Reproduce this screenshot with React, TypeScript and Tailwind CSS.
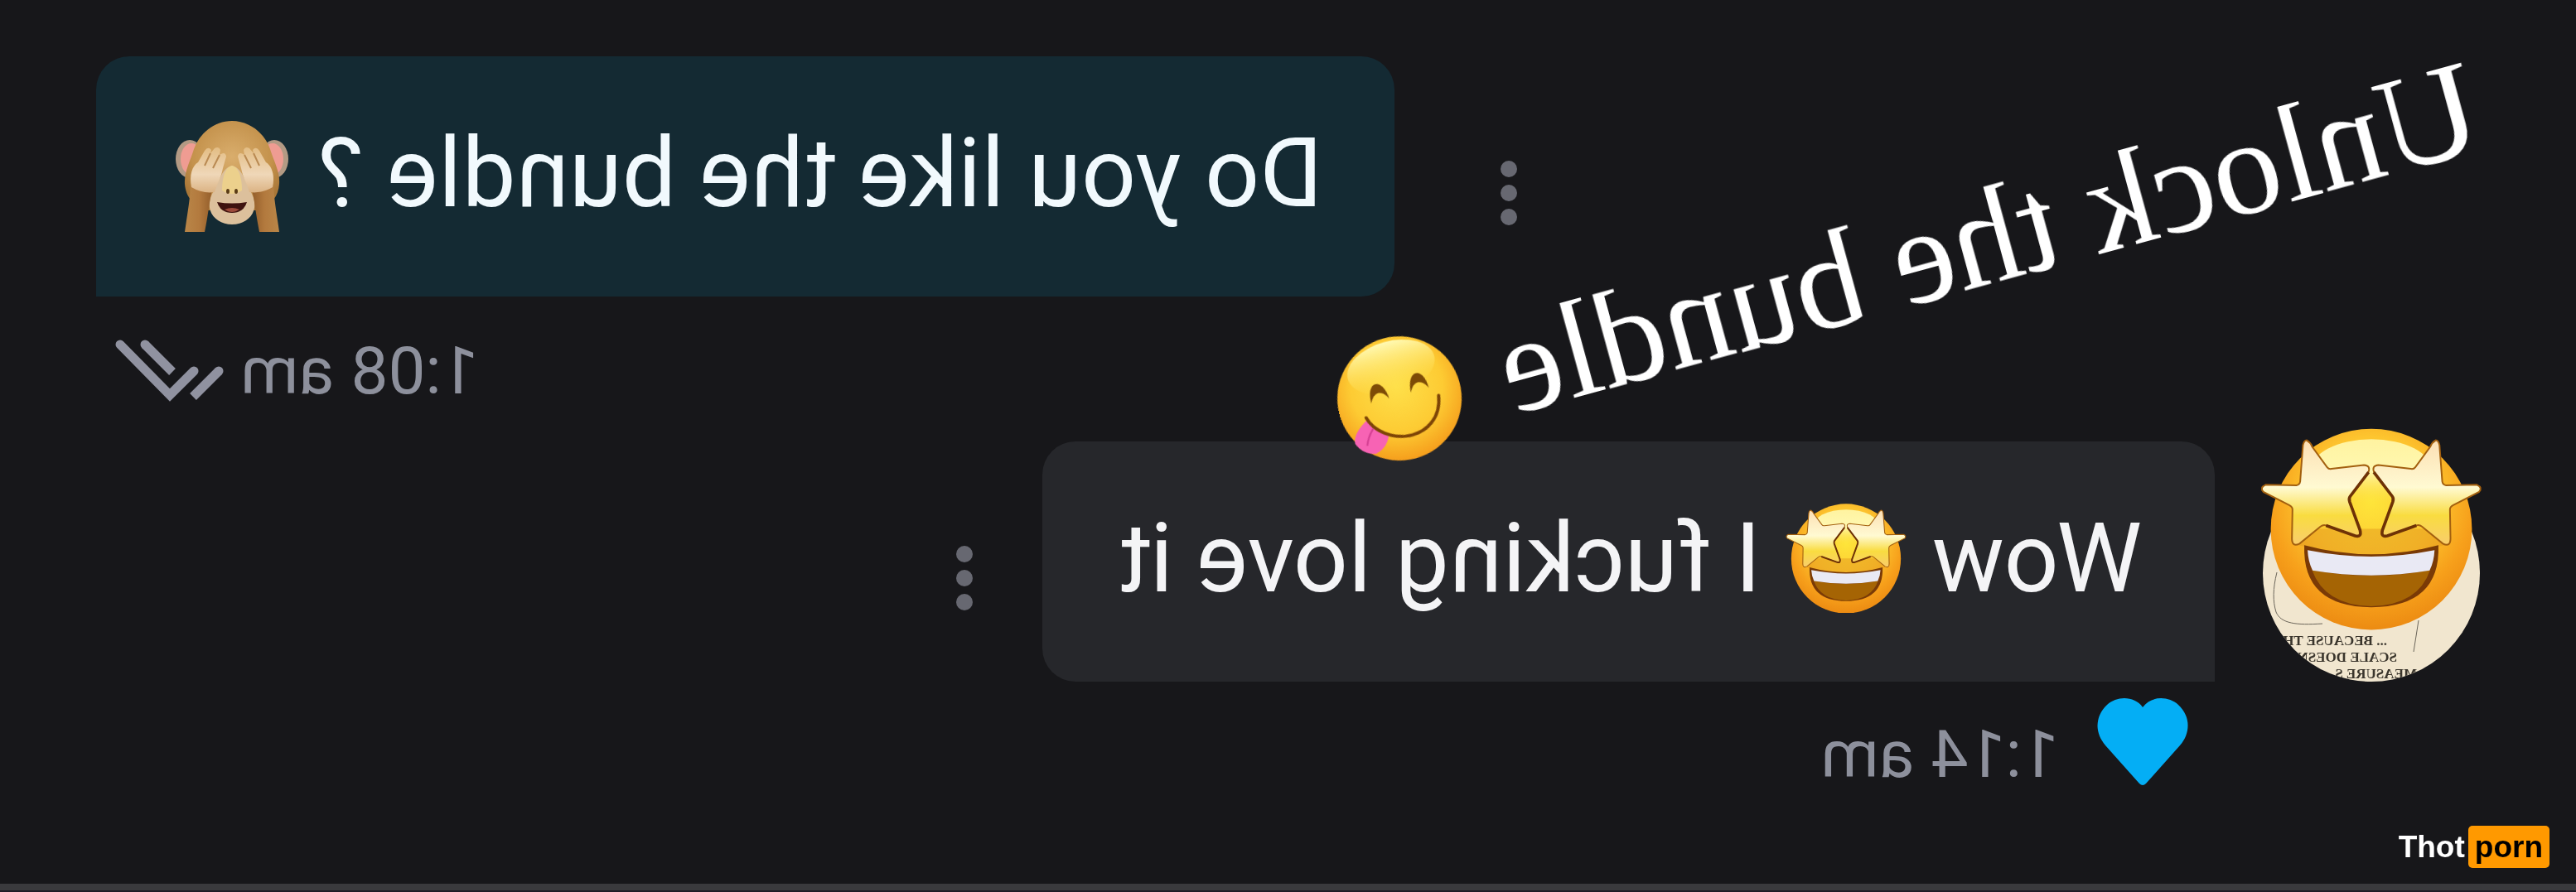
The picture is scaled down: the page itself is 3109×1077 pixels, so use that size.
import type { ReactNode } from "react";

function StarStruck({ className }: { className: string }) {
  const star =
    "M372 158 Q386 166 392 182 L446 256 Q452 264 462 262 L580 248 Q606 250 596 274 L530 362 Q524 370 528 382 L566 486 Q572 512 548 506 L442 468 Q432 464 422 472 L346 534 Q318 548 318 516 L320 410 Q320 400 308 394 L214 346 Q200 330 222 320 L334 322 Q346 320 348 308 L358 176 Q362 158 372 158 Z";
  return (
    <svg className={className} viewBox="202 114 808 736" aria-hidden="true">
      <defs>
        <radialGradient id="ss-face" cx="0.5" cy="0.36" r="0.64">
          <stop offset="0" stopColor="#fee53a" />
          <stop offset="0.5" stopColor="#fdc52f" />
          <stop offset="0.78" stopColor="#f7a01b" />
          <stop offset="1" stopColor="#ec8b12" />
        </radialGradient>
        <linearGradient id="ss-shine" x1="0" y1="0" x2="0" y2="1">
          <stop offset="0" stopColor="#fff3a0" />
          <stop offset="0.5" stopColor="#fff8b0" />
          <stop offset="1" stopColor="#fde14a" stopOpacity="0" />
        </linearGradient>
        <linearGradient id="ss-star" x1="0" y1="0" x2="0" y2="1">
          <stop offset="0" stopColor="#fcdfb4" />
          <stop offset="0.45" stopColor="#fffad2" />
          <stop offset="0.72" stopColor="#f9dc40" />
          <stop offset="1" stopColor="#f9cd6c" />
        </linearGradient>
      </defs>
      <circle cx="606" cy="482" r="366" fill="url(#ss-face)" />
      <ellipse cx="606" cy="270" rx="222" ry="116" fill="url(#ss-shine)" />
      <path d="M340 540 Q606 610 872 540 L850 480 H360 Z" fill="#e39a1e" opacity="0.5" />
      <path d="M362 540 Q606 606 850 540 Q858 764 606 766 Q354 764 362 540 Z" fill="#7a3a06" />
      <path d="M392 630 Q606 672 822 630 Q776 758 606 762 Q436 758 392 630 Z" fill="#a56404" />
      <path d="M376 558 Q606 604 838 558 Q836 600 820 632 Q606 668 394 632 Q378 600 376 558 Z" fill="#e9e9f4" />
      <g fill="url(#ss-star)" stroke="#a3600f" strokeWidth="6">
        <path d={star} />
        <path d={star} transform="translate(1213 0) scale(-1 1)" />
      </g>
      <g fill="none" stroke="#6e3206" strokeWidth="11">
        <path d="M597 274 L530 362 Q524 370 528 382 L566 486 Q572 512 548 506 L442 468" />
        <path d="M616 274 L683 362 Q689 370 685 382 L647 486 Q641 512 665 506 L771 468" />
      </g>
    </svg>
  );
}

function Yum({ className }: { className: string }) {
  return (
    <svg className={className} viewBox="0 0 100 100" aria-hidden="true">
      <defs>
        <radialGradient id="yum-face" cx="0.5" cy="0.4" r="0.62">
          <stop offset="0" stopColor="#fee04a" />
          <stop offset="0.6" stopColor="#fdcb33" />
          <stop offset="1" stopColor="#f59a1a" />
        </radialGradient>
        <linearGradient id="yum-shine" x1="0" y1="0" x2="0" y2="1">
          <stop offset="0" stopColor="#fffab4" />
          <stop offset="1" stopColor="#fee04a" stopOpacity="0" />
        </linearGradient>
      </defs>
      <circle cx="50" cy="50" r="50" fill="url(#yum-face)" />
      <ellipse cx="50" cy="24" rx="36" ry="21" fill="url(#yum-shine)" />
      <path d="M25 48 C25 29 39 29 40 48 C36 39 29 39 25 48 Z" fill="#7d4b06" />
      <path d="M58 48 C59 29 73 29 73 48 C69 39 62 39 58 48 Z" fill="#7d4b06" />
      <path d="M66 76 Q76 71 80 60 Q94 68 94 76 Q90 86 80 88 Q70 86 66 76 Z" fill="#f763b4" />
      <path d="M77 68 Q83 74 85 80" fill="none" stroke="#d43f92" strokeWidth="1.5" />
      <path d="M19 56 C22 74 36 82 50 81 C64 80 77 70 80 58" fill="none" stroke="#7d4406" strokeWidth="2.6" strokeLinecap="round" />
    </svg>
  );
}

function Monkey({ className }: { className: string }) {
  const hand =
    "M19 80 C16 66 20 54 27 50 L35 36 Q39 30 43 35 L42 39 L47 33 Q52 30 54 35 L53 41 Q60 36 61 43 L57 57 C55 68 50 76 47 86 Q32 88 19 80 Z";
  return (
    <svg className={className} viewBox="0 0 136 134" aria-hidden="true">
      <defs>
        <radialGradient id="mk-head" cx="0.5" cy="0.4" r="0.6">
          <stop offset="0" stopColor="#d9ad6c" />
          <stop offset="0.7" stopColor="#c4924c" />
          <stop offset="1" stopColor="#a97738" />
        </radialGradient>
        <linearGradient id="mk-arm" x1="0" y1="0" x2="1" y2="0">
          <stop offset="0" stopColor="#b98648" />
          <stop offset="0.5" stopColor="#b37a3e" />
          <stop offset="1" stopColor="#8f5a28" />
        </linearGradient>
        <linearGradient id="mk-hand" x1="0" y1="0" x2="0" y2="1">
          <stop offset="0" stopColor="#e3bd84" />
          <stop offset="0.6" stopColor="#efd7b8" />
          <stop offset="1" stopColor="#dbb384" />
        </linearGradient>
      </defs>
      <ellipse cx="17" cy="46" rx="17" ry="23" fill="#b39a84" />
      <ellipse cx="119" cy="46" rx="17" ry="23" fill="#b39a84" />
      <ellipse cx="19" cy="46" rx="13" ry="19" fill="#ef9c92" />
      <ellipse cx="117" cy="46" rx="13" ry="19" fill="#ef9c92" />
      <path d="M68 0 C90 0 108 16 114 34 C119 50 126 62 125 76 C124 92 114 104 96 108 H40 C22 104 12 92 11 76 C10 62 17 50 22 34 C28 16 46 0 68 0 Z" fill="url(#mk-head)" />
      <path d="M68 54 C82 58 84 76 92 88 C102 108 88 125 68 125 C48 125 34 108 44 88 C52 76 54 58 68 54 Z" fill="#dcc09c" />
      <path d="M68 54 C77 56 80 70 80 84 Q68 92 56 84 C56 70 59 56 68 54 Z" fill="#ecd08c" />
      <ellipse cx="63" cy="85" rx="2" ry="3" fill="#5a3b17" />
      <ellipse cx="73" cy="85" rx="2" ry="3" fill="#5a3b17" />
      <path d="M50 98 Q68 101 86 98 Q82 111 68 111 Q54 111 50 98 Z" fill="#3f130f" />
      <path d="M59 107 Q68 103 77 107 Q68 113 59 107 Z" fill="#9c4a3a" />
      {[false, true].map((flip) => (
        <g key={String(flip)} transform={flip ? "translate(136 0) scale(-1 1)" : undefined}>
          <path d="M18 78 H46 C41 90 41 104 35 134 H11 C14 112 17 98 18 78 Z" fill="url(#mk-arm)" />
          <path d={hand} fill="url(#mk-hand)" />
          <path d="M42 39 L35 54 M53 41 L45 57" fill="none" stroke="#b98a52" strokeWidth="2" />
        </g>
      ))}
    </svg>
  );
}

function Heart({ className }: { className: string }) {
  return (
    <svg className={className} viewBox="0 0 110 106" aria-hidden="true">
      <path d="M55 11 C65 -3 86 -3 98 8 C113 22 113 42 100 57 L59 103 Q55 107 51 103 L10 57 C-3 42 -3 22 12 8 C24 -3 45 -3 55 11 Z" fill="#04aef5" />
    </svg>
  );
}

function ReadTicks() {
  return (
    <svg className="h-[76px] w-[132px]" viewBox="0 0 132 76" fill="none" stroke="#9092a0" strokeWidth="11" role="img" aria-label="Read">
      <path d="M36 38 L65 67 L125 6" strokeLinecap="round" />
      <path d="M62 39 L95 6" />
      <path d="M6 38 L37 69" />
      <circle cx="95" cy="6" r="5.5" fill="#9092a0" stroke="none" />
      <circle cx="6" cy="38" r="5.5" fill="#9092a0" stroke="none" />
    </svg>
  );
}

function MenuButton() {
  return (
    <button type="button" aria-label="Message options" className="mt-10 flex flex-col items-center gap-[9px] p-2">
      <span className="size-5 rounded-full bg-[#676871]" />
      <span className="size-5 rounded-full bg-[#676871]" />
      <span className="size-5 rounded-full bg-[#676871]" />
    </button>
  );
}

function Bubble({ className, children }: { className: string; children: ReactNode }) {
  return (
    <p className={`flex h-[290px] items-center rounded-t-[40px] pb-2 text-[116px] leading-none whitespace-nowrap ${className}`}>
      {children}
    </p>
  );
}

function Avatar() {
  return (
    <div className="relative mr-[58px] size-[262px] self-end">
      <div className="size-full overflow-hidden rounded-full bg-[#f1e6cf] pt-[203px] font-['Liberation_Serif',serif] text-[17px] leading-[20px] font-bold whitespace-nowrap text-[#3a352c]">
        <p className="pl-[112px]">... BECAUSE THE</p>
        <p className="pl-[100px]">SCALE DOESN'T</p>
        <p className="pl-[76px]">MEASURE S</p>
      </div>
      <svg className="absolute inset-0 size-full" viewBox="0 0 262 262" fill="none" stroke="#6b655a" aria-hidden="true">
        <path d="M245 130 C250 150 250 165 246 178 C240 192 222 194 190 192" />
        <path d="M74 188 L80 226" />
      </svg>
      <StarStruck className="absolute -top-[44px] -left-[3px] w-[268px]" />
    </div>
  );
}

export default function App() {
  return (
    <div className="relative min-h-screen overflow-hidden bg-[#17171a] font-[Roboto,sans-serif]">
      <main className="relative flex -scale-x-100 flex-col px-[116px] pt-[68px]">
        <article>
          <div className="flex items-center justify-end gap-[120px]">
            <MenuButton />
            <Bubble className="gap-9 rounded-bl-[40px] bg-[#142a33] pr-24 pl-[87px] text-[#f1f9fd]">
              <span>Do you like the bundle ?</span>
              <Monkey className="mt-2 w-[136px]" />
            </Bubble>
          </div>
          <footer className="flex h-[175px] items-center justify-end gap-5 pt-1 pr-[22px] text-[80px] leading-none text-[#8d909c]">
            <time>1:08 am</time>
            <ReadTicks />
          </footer>
        </article>

        <article>
          <div className="flex items-center">
            <Avatar />
            <Bubble className="mr-[76px] gap-[30px] rounded-br-[40px] bg-[#26272b] pr-[92px] pl-[87px] text-[#f4f4f6]">
              <span>Wow</span>
              <StarStruck className="w-[146px]" />
              <span>I fucking love it</span>
            </Bubble>
            <MenuButton />
          </div>
          <footer className="flex h-[175px] items-center gap-[46px] pl-[352px] text-[80px] leading-none text-[#8d909c]">
            <Heart className="mt-5 h-[106px] w-[110px] self-start" />
            <time>1:14 am</time>
          </footer>
        </article>

        <p className="absolute top-[40px] left-[100px] flex origin-bottom-left rotate-[15.3deg] items-center gap-[52px] font-['Liberation_Serif',serif] text-[165px] leading-none whitespace-nowrap text-white">
          <span>Unlock the bundle</span>
          <Yum className="w-[150px]" />
        </p>
      </main>

      <a href="#" className="absolute right-8 bottom-[29px] flex items-center gap-1 font-['Liberation_Sans',sans-serif] text-[37px] leading-[51px] font-bold text-white">
        Thot
        <span className="rounded-[5px] bg-[#ff9900] px-2 text-black">porn</span>
      </a>
      <div className="absolute inset-x-0 bottom-0 h-[10px] border-b-2 border-[#1d1b26] bg-[#3a3a3d]" />
    </div>
  );
}
